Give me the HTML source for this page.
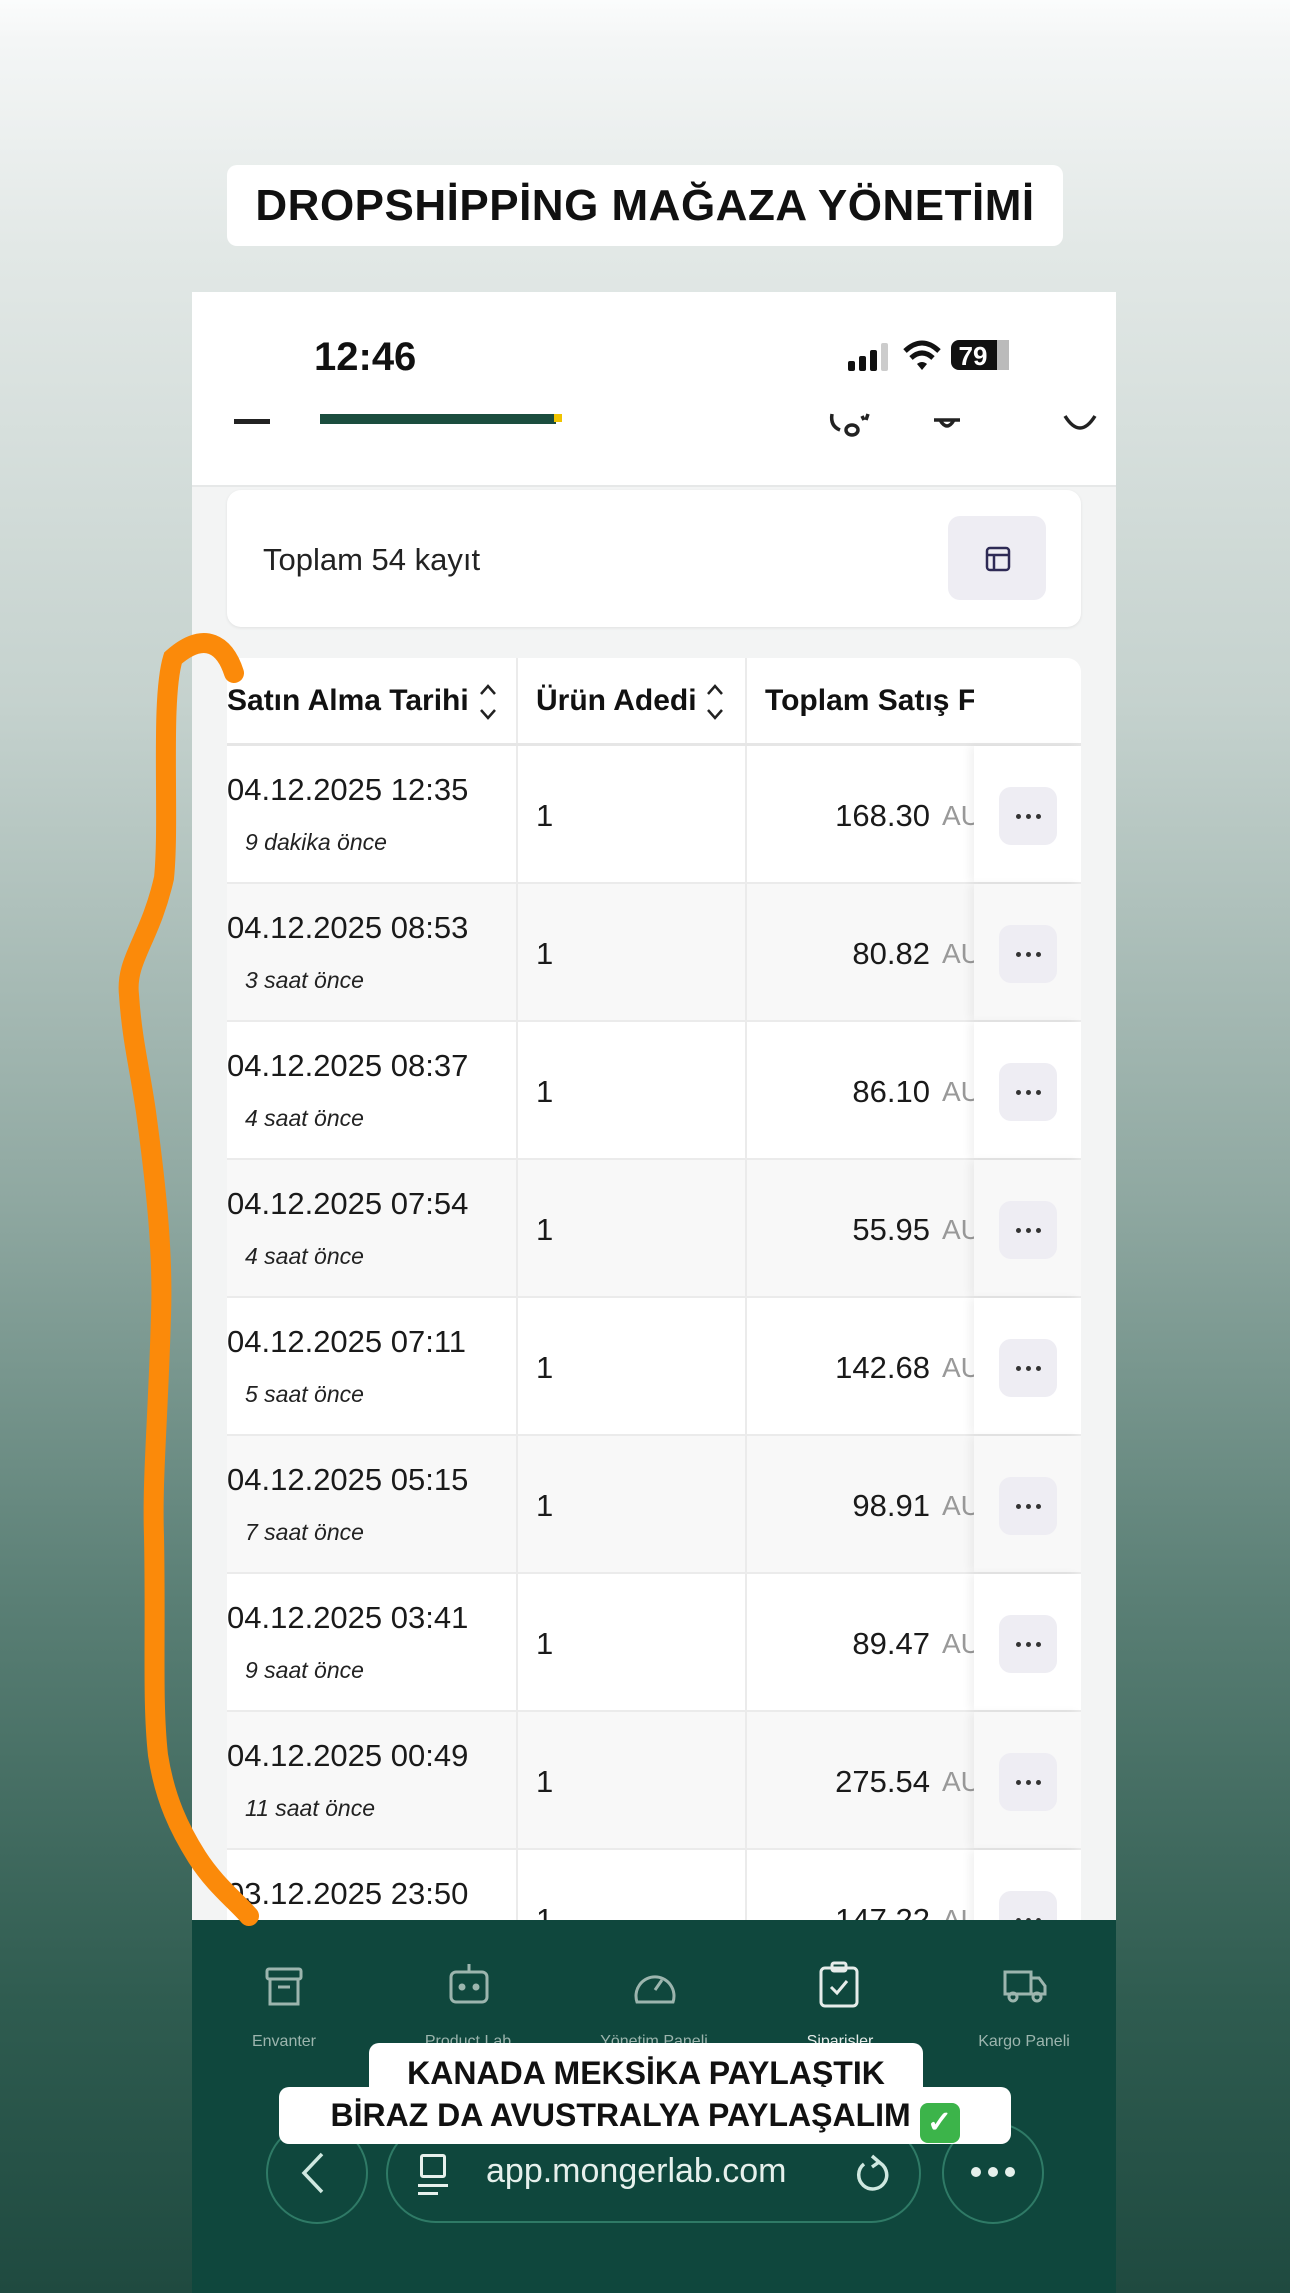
<!DOCTYPE html>
<html><head><meta charset="utf-8">
<style>
*{margin:0;padding:0;box-sizing:border-box}
body{width:1290px;height:2293px;overflow:hidden;position:relative;font-family:"Liberation Sans",sans-serif;
background:linear-gradient(180deg,#fbfcfc 0px,#f4f6f6 40px,#e2e8e6 250px,#c5d2ce 700px,#8fa8a1 1200px,#5a7f75 1600px,#2f5c50 2000px,#1f4a40 2293px)}
.abs{position:absolute}
.title{left:227px;top:165px;width:836px;height:81px;background:#fff;border-radius:10px;font-weight:900;font-size:44px;line-height:81px;text-align:center;color:#111;letter-spacing:0.5px}
.phone{left:192px;top:292px;width:924px;height:2001px;background:#f3f4f4;overflow:hidden}
.hdr{left:0;top:0;width:924px;height:195px;background:#fff;border-bottom:2px solid #e6e8e8;overflow:hidden}
.card{left:35px;top:198px;width:854px;height:137px;background:#fff;border-radius:14px;box-shadow:0 1px 3px rgba(0,0,0,.08)}
.tbl{left:35px;top:366px;width:854px;height:1700px;background:#fff;border-radius:14px 14px 0 0;overflow:hidden}
.row{position:absolute;left:0;width:854px;height:138px;border-bottom:2px solid #ebebeb}
.c{position:absolute;top:0;height:100%;border-right:2px solid #ebebeb}
.date{position:absolute;left:0;top:26px;font-size:31px;color:#1a1a1a}
.ago{position:absolute;left:18px;top:83px;font-size:23px;font-style:italic;color:#222}
.one{position:absolute;left:18px;top:52px;font-size:31px;color:#1a1a1a}
.amt{position:absolute;right:0;top:52px;font-size:31px;color:#1a1a1a;width:227px;text-align:right;padding-right:44px;white-space:nowrap;overflow:hidden}
.amt span{color:#999;position:absolute;left:195px;font-size:28px;top:2px}
.dots{position:absolute;left:25px;top:41px;width:58px;height:58px;background:#eeedf3;border-radius:12px}
.dots i{position:absolute;top:27px;width:5px;height:5px;border-radius:3px;background:#333}
.nav{left:0;top:1628px;width:924px;height:373px;background:#0f473d}
.nl{position:absolute;top:113px;width:200px;text-align:center;font-size:16px;color:#9cb5ae}
.cap{background:#fff;border-radius:10px;font-weight:900;font-size:32px;text-align:center;color:#111}
</style></head><body>
<div class="abs title">DROPSHİPPİNG MAĞAZA YÖNETİMİ</div>
<div class="abs phone">
 <div class="abs hdr">
  <div class="abs" style="left:122px;top:43px;font-size:40px;font-weight:600;color:#111">12:46</div>
  <svg class="abs" style="left:655px;top:45px" width="290" height="40" viewBox="0 0 290 40">
   <rect x="1" y="24" width="7" height="10" rx="2" fill="#111"/><rect x="12" y="19" width="7" height="15" rx="2" fill="#111"/><rect x="23" y="13" width="7" height="21" rx="2" fill="#111"/><rect x="34" y="6" width="7" height="28" rx="2" fill="#ccc"/>
   <path d="M58 14 Q75 -2 92 14" stroke="#111" stroke-width="5" fill="none"/><path d="M64 21 Q75 11 86 21" stroke="#111" stroke-width="5" fill="none"/><path d="M70 27 L75 33 L80 27 Q75 23 70 27Z" fill="#111"/>
   <rect x="104" y="3" width="58" height="30" rx="8" fill="#111"/><rect x="150" y="3" width="12" height="30" fill="#bbb"/><text x="126" y="28" font-size="26" font-weight="bold" fill="#fff" text-anchor="middle" font-family="Liberation Sans">79</text>
  </svg>
  <div class="abs" style="left:42px;top:127px;width:36px;height:5px;background:#222"></div>
  <div class="abs" style="left:128px;top:122px;width:236px;height:10px;background:#1b4d3e"></div>
  <div class="abs" style="left:362px;top:122px;width:8px;height:8px;background:#f0c400"></div>
  <svg class="abs" style="left:630px;top:118px" width="290" height="40" fill="none" stroke="#222" stroke-width="3.5">
   <path d="M10 4 Q8 16 18 20 M24 20 a6 5 0 1 0 12 0 a6 5 0 1 0 -12 0 M40 6 l2 4 M46 4 l-2 6"/>
   <path d="M112 10 h26 M118 10 q7 12 14 0"/>
   <path d="M243 6 q15 24 30 0"/>
  </svg>
 </div>
 <div class="abs card">
  <div class="abs" style="left:36px;top:52px;font-size:31px;color:#222">Toplam 54 kayıt</div>
  <div class="abs" style="left:721px;top:26px;width:98px;height:84px;background:#eeedf3;border-radius:12px"></div>
  <svg class="abs" style="left:758px;top:56px" width="26" height="26"><rect x="2" y="2" width="22" height="22" rx="3" fill="none" stroke="#2e2a55" stroke-width="2.5"/><line x1="2" y1="9" x2="24" y2="9" stroke="#2e2a55" stroke-width="2.5"/><line x1="9" y1="9" x2="9" y2="24" stroke="#2e2a55" stroke-width="2.5"/></svg>
 </div>
 <div class="abs tbl">
  <div class="row" style="top:0;height:88px;border-bottom:3px solid #e6e6e6">
   <div class="c" style="left:0;width:291px"><div class="abs" style="left:0;top:26px;font-size:30px;font-weight:bold;color:#111">Satın Alma Tarihi</div>
    <svg class="abs" style="left:250px;top:24px" width="22" height="40" fill="none" stroke="#222" stroke-width="2.5"><path d="M4 12 l7 -8 l7 8 M4 28 l7 8 l7 -8"/></svg></div>
   <div class="c" style="left:291px;width:229px"><div class="abs" style="left:18px;top:26px;font-size:30px;font-weight:bold;color:#111">Ürün Adedi</div>
    <svg class="abs" style="left:186px;top:24px" width="22" height="40" fill="none" stroke="#222" stroke-width="2.5"><path d="M4 12 l7 -8 l7 8 M4 28 l7 8 l7 -8"/></svg></div>
   <div class="c" style="left:520px;width:227px;overflow:hidden;border-right:none"><div class="abs" style="left:18px;top:26px;font-size:30px;font-weight:bold;color:#111;white-space:nowrap">Toplam Satış F</div></div>
  </div>
  <div id="rows"></div>
 </div>
 <div class="abs nav">
  <svg class="abs" style="left:0;top:40px" width="924" height="70" viewBox="0 0 924 70" fill="none" stroke="#9cb5ae" stroke-width="3">
   <rect x="75" y="9" width="34" height="10" rx="2"/><rect x="78" y="19" width="28" height="25"/><line x1="86" y1="27" x2="98" y2="27"/>
   <rect x="259" y="12" width="36" height="30" rx="5" stroke="#9cb5ae"/><line x1="277" y1="4" x2="277" y2="12"/><circle cx="270" cy="27" r="2" fill="#9cb5ae"/><circle cx="284" cy="27" r="2" fill="#9cb5ae"/>
   <path d="M445 42 A19 19 0 1 1 481 42 Z"/><line x1="463" y1="30" x2="470" y2="20"/>
   <rect x="629" y="8" width="36" height="38" rx="4" stroke="#e6ecea"/><rect x="640" y="3" width="14" height="8" rx="2" stroke="#e6ecea"/><path d="M639 27 l6 6 l10 -12" stroke="#e6ecea"/>
   <rect x="813" y="12" width="26" height="22"/><path d="M839 18 h8 l6 8 v8 h-14z"/><circle cx="821" cy="37" r="4"/><circle cx="845" cy="37" r="4"/>
  </svg>
  <div class="nl" style="left:-8px">Envanter</div>
  <div class="nl" style="left:176px">Product Lab</div>
  <div class="nl" style="left:362px">Yönetim Paneli</div>
  <div class="nl" style="left:548px;color:#e6ecea">Siparişler</div>
  <div class="nl" style="left:732px">Kargo Paneli</div>
 </div>
</div>
<div class="abs" style="left:266px;top:2122px;width:102px;height:102px;border-radius:51px;border:2px solid #2f7a66;background:#0f473d"></div>
<svg class="abs" style="left:298px;top:2150px" width="30" height="46" fill="none" stroke="#cfe8e0" stroke-width="3.5"><path d="M24 4 L6 23 L24 42"/></svg>
<div class="abs" style="left:386px;top:2124px;width:535px;height:99px;border-radius:50px;border:2px solid #2f7a66;background:#0f473d"></div>
<div class="abs" style="left:486px;top:2152px;font-size:34px;color:#e6f0ec">app.mongerlab.com</div>
<div class="abs" style="left:420px;top:2154px;width:26px;height:24px;border:3px solid #e6f0ec;border-radius:3px"></div>
<div class="abs" style="left:418px;top:2184px;width:30px;height:3px;background:#e6f0ec"></div>
<div class="abs" style="left:418px;top:2192px;width:20px;height:3px;background:#e6f0ec"></div>
<svg class="abs" style="left:852px;top:2152px" width="40" height="44" fill="none" stroke="#cfe8e0" stroke-width="3.5"><path d="M26 10 A14 14 0 1 1 12 12 M20 4 l7 6 l-7 5"/></svg>
<div class="abs" style="left:942px;top:2122px;width:102px;height:102px;border-radius:51px;border:2px solid #2f7a66;background:#0f473d"></div>
<svg class="abs" style="left:970px;top:2166px" width="46" height="12"><circle cx="6" cy="6" r="5" fill="#e6f0ec"/><circle cx="23" cy="6" r="5" fill="#e6f0ec"/><circle cx="40" cy="6" r="5" fill="#e6f0ec"/></svg>
<div class="abs cap" style="left:369px;top:2043px;width:554px;height:60px;line-height:60px">KANADA MEKSİKA PAYLAŞTIK</div>
<div class="abs cap" style="left:279px;top:2087px;width:732px;height:57px;line-height:57px">BİRAZ DA AVUSTRALYA PAYLAŞALIM <span style="display:inline-block;width:40px;height:40px;background:#3cb44a;border-radius:8px;color:#fff;line-height:40px;vertical-align:-6px;font-size:30px">✓</span></div>
<svg class="abs" style="left:0;top:0" width="1290" height="2293"><path d="M234 673 C225 645 205 630 173 658 C160 700 170 820 164 878 C150 940 125 960 129 995 C132 1040 140 1070 146 1112 C158 1200 163 1260 161 1316 C158 1420 152 1480 154 1536 C156 1640 152 1700 158 1755 C165 1800 180 1830 197 1857 C215 1885 235 1900 249 1916" stroke="#fb8a0a" stroke-width="20" fill="none" stroke-linecap="round"/></svg>
<script>
var d=[["04.12.2025 12:35","9 dakika önce","168.30"],["04.12.2025 08:53","3 saat önce","80.82"],["04.12.2025 08:37","4 saat önce","86.10"],["04.12.2025 07:54","4 saat önce","55.95"],["04.12.2025 07:11","5 saat önce","142.68"],["04.12.2025 05:15","7 saat önce","98.91"],["04.12.2025 03:41","9 saat önce","89.47"],["04.12.2025 00:49","11 saat önce","275.54"],["03.12.2025 23:50","","147.22"]];
var h="";d.forEach(function(r,i){var t=88+i*138;var bg=i%2?"#f8f8f8":"#fff";
h+='<div class="row" style="top:'+t+'px;background:'+bg+'"><div class="c" style="left:0;width:291px"><div class="date">'+r[0]+'</div><div class="ago">'+r[1]+'</div></div><div class="c" style="left:291px;width:229px"><div class="one">1</div></div><div class="c" style="left:520px;width:227px;overflow:hidden;border-right:none"><div class="amt" style="left:0">'+r[2]+'<span>AUD</span></div></div><div class="c" style="left:747px;width:107px;border-right:none;box-shadow:-5px 0 8px rgba(0,0,0,.05)"><div class="dots"><i style="left:17px"></i><i style="left:27px"></i><i style="left:37px"></i></div></div></div>';});
document.getElementById("rows").innerHTML=h;
</script>
</body></html>
